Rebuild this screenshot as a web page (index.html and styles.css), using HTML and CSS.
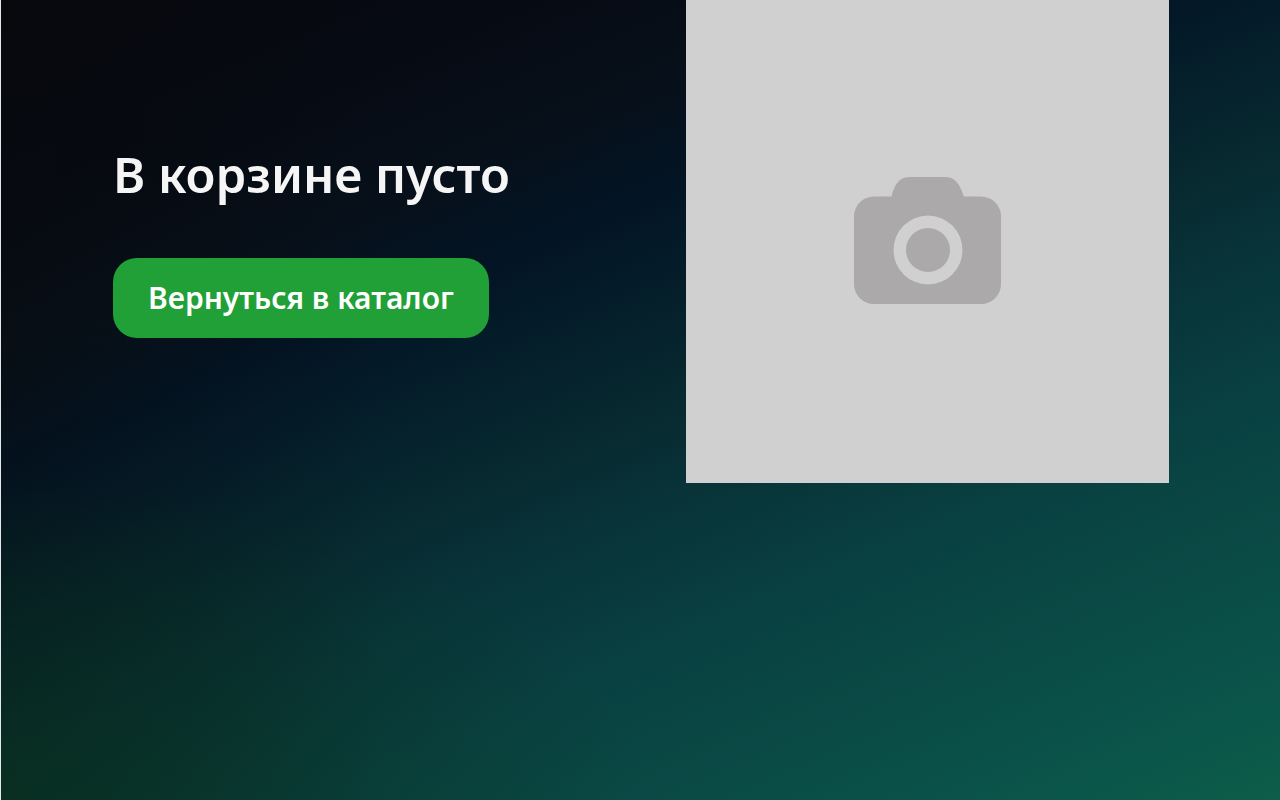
FILE: index.html
```html
<!DOCTYPE html>
<html lang="ru">
<head>
<meta charset="utf-8">
<meta name="viewport" content="width=device-width, initial-scale=1">
<title>Корзина</title>
<link rel="stylesheet" href="styles.css">
</head>
<body class="page">
<main class="empty-cart">
  <section class="message">
    <h1 class="title">В корзине пусто</h1>
    <button class="back-button" type="button">Вернуться в каталог</button>
  </section>
  <div class="placeholder">
    <svg class="camera" viewBox="0 0 147 129" aria-hidden="true">
      <path fill="#aba9aa" fill-rule="evenodd" d="M20 19.500H37.500C40 11 43 0 56 0H91C103 0 107 11 110 19.500H127A20 20 0 0 1 147 39.500V107A20 20 0 0 1 127 127H20A20 20 0 0 1 0 107V39.500A20 20 0 0 1 20 19.500ZM74 38.500A34.500 34.500 0 1 0 74 107.500A34.500 34.500 0 1 0 74 38.500Z"/>
      <circle cx="74" cy="73" r="22" fill="#aba9aa"/>
    </svg>
  </div>
</main>
</body>
</html>
```
FILE: styles.css
```css
* {
  box-sizing: border-box;
}

.page {
  margin: 0;
  min-height: 100vh;
  border-left: 1px solid #e4e8e8;
  background:
    radial-gradient(ellipse 50% 40% at 0% 100%, rgba(8, 50, 26, 0.6), rgba(8, 50, 26, 0)) no-repeat,
    linear-gradient(90deg, rgba(8, 10, 8, 0.25), rgba(8, 10, 8, 0) 30%) no-repeat,
    linear-gradient(157deg, #07080e 0%, #060a13 17%, #07101a 27%, #031424 35%, #041c29 41%, #07282f 50%, #083338 58%, #094041 69%, #0a4844 78%, #0a5049 87%, #0b564a 93%, #0d5d49 100%) no-repeat;
  font-family: "Noto Sans", sans-serif;
}

.empty-cart {
  display: flex;
  align-items: center;
  justify-content: space-between;
  padding: 0 111px 0 112px;
}

.message {
  display: flex;
  flex-direction: column;
  align-items: flex-start;
  gap: 56px;
}

.title {
  margin: 0;
  color: #f5f5f5;
  font-size: 49px;
  font-weight: 600;
  line-height: 56px;
}

.back-button {
  padding: 20px 35px;
  border: 0;
  border-radius: 24px;
  background: #21a038;
  color: #fff;
  font-family: inherit;
  font-size: 30px;
  font-weight: 600;
  line-height: 40px;
}

.placeholder {
  display: flex;
  align-items: center;
  justify-content: center;
  width: 483px;
  max-width: 50%;
  aspect-ratio: 1;
  background: #d0d0d0;
}

.camera {
  width: 147px;
}
```
